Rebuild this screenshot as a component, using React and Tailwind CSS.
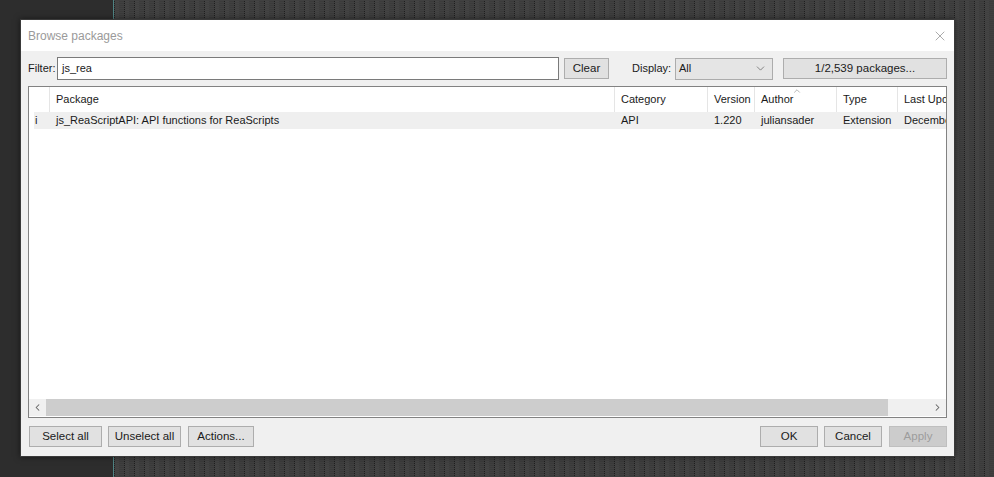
import React from 'react';
import { X, ChevronDown, ChevronLeft, ChevronRight, ChevronUp } from 'lucide-react';

const font = { fontFamily: '"Liberation Sans", Arial, sans-serif' };

const columns = [
  { title: '', width: 'w-[20px]' },
  { title: 'Package', width: 'w-[565px]' },
  { title: 'Category', width: 'w-[93px]' },
  { title: 'Version', width: 'w-[47px]' },
  { title: 'Author', width: 'w-[82px]', sorted: true },
  { title: 'Type', width: 'w-[61px]' },
  { title: 'Last Upd', width: 'flex-1' },
];

const row = ['i', 'js_ReaScriptAPI: API functions for ReaScripts', 'API', '1.220', 'juliansader', 'Extension', 'December'];

const Button = ({ children, className = '', disabled }) => (
  <button
    className={`h-[21px] border text-[11.5px] leading-none flex items-center justify-center ${
      disabled ? 'bg-[#cccccc] border-[#bfbfbf] text-[#9c9c9c]' : 'bg-[#e1e1e1] border-[#adadad] text-[#1a1a1a]'
    } ${className}`}
  >
    {children}
  </button>
);

const App = () => {
  return (
    <div className="relative w-[994px] h-[477px] flex overflow-hidden" style={font}>
      <div className="w-[113px] bg-[#2d2d2d]" />
      <div className="w-[1px] bg-[#4f8383]" />
      <div className="flex-1 bg-[#3f3f3f] bg-[repeating-linear-gradient(0deg,#404040_0px,#404040_1px,transparent_1px,transparent_2px),repeating-linear-gradient(90deg,#1e1e1e_0px,#1e1e1e_1px,#444444_1px,#444444_5px,#3b3b3b_5px,#3b3b3b_10px)]" />

      <div className="absolute left-[20px] top-[19px] w-[935px] h-[438px] border border-[#3a3a3a] flex flex-col bg-[#f0f0f0] shadow-[0_0_6px_rgba(0,0,0,0.5)]">
        <div className="h-[31px] bg-white flex items-center justify-between pl-[7px] pr-[6px]">
          <span className="text-[12px] text-[#9a9a9a]">Browse packages</span>
          <X size={16} strokeWidth={1} className="text-[#808080]" />
        </div>

        <div className="flex-1 flex flex-col px-[7px] pt-[6px] pb-[8px]">
          <div className="h-[23px] flex items-center text-[11px] text-[#1a1a1a]">
            <span className="w-[29px]">Filter:</span>
            <div className="w-[502px] h-[23px] bg-white border border-[#7a7a7a] flex items-center px-[4px]">js_rea</div>
            <Button className="ml-[5px] w-[45px]">Clear</Button>
            <span className="ml-[23px] w-[43px]">Display:</span>
            <div className="w-[98px] h-[22px] bg-[#e5e5e5] border border-[#acacac] flex items-center justify-between pl-[3px] pr-[5px]">
              <span>All</span>
              <ChevronDown size={13} strokeWidth={1.2} className="text-[#505050]" />
            </div>
            <Button className="ml-[10px] flex-1">1/2,539 packages...</Button>
          </div>

          <div className="mt-[6px] h-[332px] border border-[#828282] bg-white flex flex-col text-[11px] text-[#1a1a1a]">
            <div className="h-[25px] flex">
              {columns.map((c, i) => (
                <div
                  key={i}
                  className={`${c.width} relative flex items-center pl-[6px] ${i > 0 ? 'border-l border-[#e5e5e5]' : ''} overflow-hidden whitespace-nowrap`}
                >
                  {c.sorted && (
                    <ChevronUp size={10} strokeWidth={1.2} className="absolute left-[37px] top-[-1px] text-[#707070]" />
                  )}
                  {c.title}
                </div>
              ))}
            </div>
            <div className="h-[17px] flex ml-[5px] bg-[#efefef]">
              {row.map((v, i) => (
                <div
                  key={i}
                  className={`${i === 0 ? 'w-[15px] pl-[1px]' : columns[i].width} flex items-center ${i > 0 ? 'pl-[7px]' : ''} overflow-hidden whitespace-nowrap`}
                >
                  {v}
                </div>
              ))}
            </div>
            <div className="flex-1" />
            <div className="h-[17px] flex bg-[#f0f0f0] mb-[1px]">
              <div className="w-[17px] flex items-center justify-center">
                <ChevronLeft size={11} strokeWidth={2.2} className="text-[#606060]" />
              </div>
              <div className="w-[842px] bg-[#cdcdcd]" />
              <div className="flex-1" />
              <div className="w-[17px] flex items-center justify-center">
                <ChevronRight size={11} strokeWidth={2.2} className="text-[#606060]" />
              </div>
            </div>
          </div>

          <div className="mt-[8px] flex items-center">
            <Button className="ml-[1px] w-[73px]">Select all</Button>
            <Button className="ml-[6px] w-[73px]">Unselect all</Button>
            <Button className="ml-[7px] w-[66px]">Actions...</Button>
            <div className="flex-1" />
            <Button className="w-[58px]">OK</Button>
            <Button className="ml-[6px] w-[58px]">Cancel</Button>
            <Button className="ml-[7px] w-[58px]" disabled>Apply</Button>
          </div>
        </div>
      </div>
    </div>
  );
};

export default App;
